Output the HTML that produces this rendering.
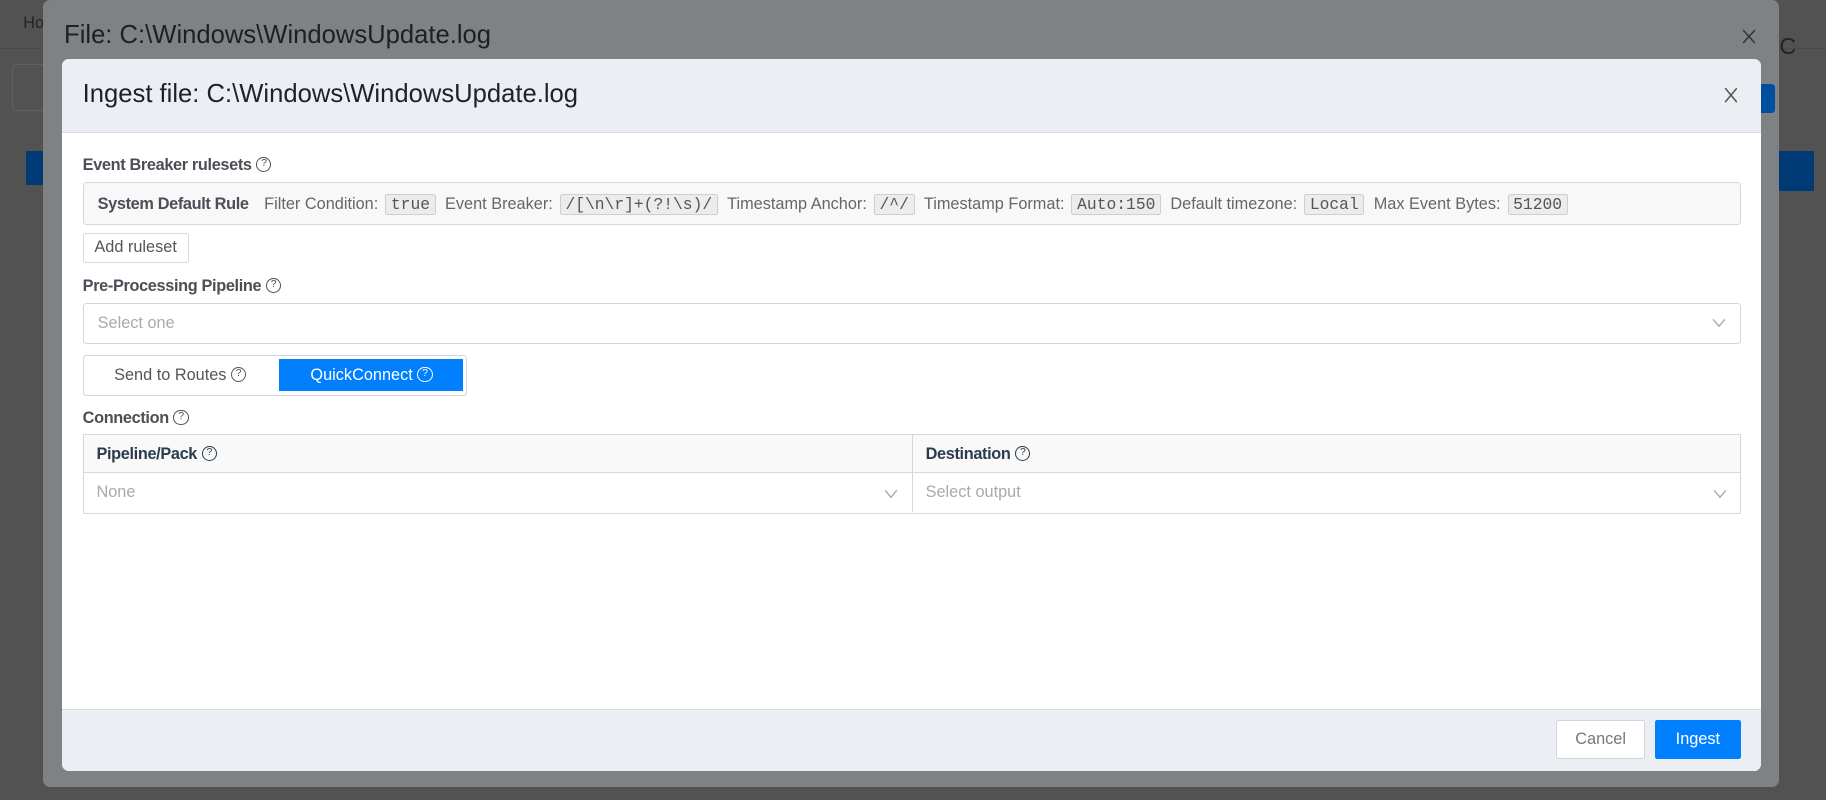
<!DOCTYPE html>
<html><head><meta charset="utf-8"><style>
*{box-sizing:border-box;margin:0;padding:0}
html,body{width:1826px;height:800px;overflow:hidden;background:#525252;font-family:"Liberation Sans",sans-serif}
#w{zoom:1.16454;width:1568px;height:687px;position:relative}
.a{position:absolute}
.q{display:inline-block;width:13px;height:13px;border:1.2px solid currentColor;border-radius:50%;font-size:9px;line-height:11px;text-align:center;vertical-align:middle;margin-left:4px;font-weight:normal;position:relative;top:-1px}
.lbl{font-size:14px;color:#4a4f55;font-weight:bold;letter-spacing:-0.3px}
.chip{font-family:"Liberation Mono",monospace;font-size:14px;background:#ececec;border:1px solid #cfcfcf;border-radius:2px;padding:0 4px;color:#555;margin:0 8px 0 6px}
.rs{font-size:14px;color:#666}
</style></head><body><div id="w">
<div class="a" style="left:0;top:0;width:1568px;height:42px;border-bottom:1px solid #4a4a4a"></div>
<div class="a" style="left:20px;top:12px;font-size:14px;color:#222">Ho</div>
<div class="a" style="left:10px;top:55px;width:40px;height:40px;border:1px solid #606060;border-radius:3px"></div>
<div class="a" style="left:22px;top:130px;width:20px;height:29px;background:#003a75"></div>
<div class="a" style="left:1528px;top:130px;width:30px;height:34px;background:#003a75"></div>
<div class="a" style="left:1528px;top:28px;font-size:20px;color:#222">C</div>
<div class="a" style="left:37px;top:0;width:1491px;height:676px;background:#7f8285;border-radius:6px"></div>
<div class="a" style="left:55px;top:18px;font-size:22px;color:#1d1f21">File: C:\Windows\WindowsUpdate.log</div>
<svg class="a" style="left:1496px;top:25px" width="12" height="13" viewBox="0 0 12 13"><path d="M1 1 L11 12 M11 1 L1 12" stroke="#333" stroke-width="1.3"/></svg>
<div class="a" style="left:1512px;top:72px;width:12px;height:25px;background:#004f9e;border-radius:0 3px 3px 0"></div>

<div class="a" style="left:53px;top:51px;width:1459px;height:611px;background:#fff;border-radius:6px;overflow:hidden">
 <div class="a" style="left:0;top:0;width:1459px;height:63px;background:#ebeff3;border-bottom:1px solid #d8dde2"></div>
 <div class="a" style="left:18px;top:18px;font-size:22px;color:#1e2226">Ingest file: C:\Windows\WindowsUpdate.log</div>
 <svg class="a" style="left:1427px;top:24px" width="12" height="14" viewBox="0 0 12 14"><path d="M1 1 L11 13 M11 1 L1 13" stroke="#555" stroke-width="1.3"/></svg>

 <div class="a lbl" style="left:18px;top:83px">Event Breaker rulesets<span class="q">?</span></div>
 <div class="a" style="left:18px;top:105px;width:1424px;height:37px;background:#f8f8f8;border:1px solid #d6d9dc;border-radius:3px;padding:0 12px;line-height:35px;white-space:nowrap">
  <b style="font-size:14px;color:#4a4f55;letter-spacing:-0.3px">System Default Rule</b>&nbsp;&nbsp;&nbsp;<span class="rs">Filter Condition:</span><span class="chip">true</span><span class="rs">Event Breaker:</span><span class="chip">/[\n\r]+(?!\s)/</span><span class="rs">Timestamp Anchor:</span><span class="chip">/^/</span><span class="rs">Timestamp Format:</span><span class="chip">Auto:150</span><span class="rs">Default timezone:</span><span class="chip">Local</span><span class="rs">Max Event Bytes:</span><span class="chip">51200</span>
 </div>
 <div class="a" style="left:18px;top:149px;width:91px;height:26px;border:1px solid #d6d9dc;border-radius:2px;font-size:14px;color:#555;text-align:center;line-height:24px">Add ruleset</div>

 <div class="a lbl" style="left:18px;top:187px">Pre-Processing Pipeline<span class="q">?</span></div>
 <div class="a" style="left:18px;top:209px;width:1424px;height:35px;border:1px solid #d0d6dc;border-radius:3px;font-size:14px;color:#aaa;padding-left:12px;line-height:33px">Select one
  <svg class="a" style="right:12px;top:11px" width="12" height="10" viewBox="0 0 12 10"><path d="M1 2 L6 8 L11 2" fill="none" stroke="#aaa" stroke-width="1.2"/></svg></div>

 <div class="a" style="left:18px;top:254px;width:330px;height:35px;border:1px solid #d0d6dc;border-radius:3px"></div>
 <div class="a" style="left:45px;top:263px;font-size:14px;color:#555">Send to Routes<span class="q">?</span></div>
 <div class="a" style="left:187px;top:257px;width:158px;height:28px;background:#0080ff;color:#fff;font-size:14px;text-align:center;line-height:28px">QuickConnect<span class="q">?</span></div>

 <div class="a lbl" style="left:18px;top:300px">Connection<span class="q">?</span></div>
 <div class="a" style="left:18px;top:322px;width:1424px;height:68px;border:1px solid #d6d9dc">
  <div class="a" style="left:0;top:0;width:1422px;height:32px;background:#f9f9f9;border-bottom:1px solid #d6d9dc"></div>
  <div class="a" style="left:711px;top:0;width:1px;height:66px;background:#d6d9dc"></div>
  <div class="a" style="left:11px;top:8px;font-size:14px;font-weight:bold;color:#2b3b4d;letter-spacing:-0.3px">Pipeline/Pack<span class="q">?</span></div>
  <div class="a" style="left:723px;top:8px;font-size:14px;font-weight:bold;color:#2b3b4d;letter-spacing:-0.3px">Destination<span class="q">?</span></div>
  <div class="a" style="left:11px;top:41px;font-size:14px;color:#aaa">None</div>
  <div class="a" style="left:723px;top:41px;font-size:14px;color:#aaa">Select output</div>
  <svg class="a" style="left:687px;top:45px" width="12" height="10" viewBox="0 0 12 10"><path d="M1 2 L6 8 L11 2" fill="none" stroke="#aaa" stroke-width="1.2"/></svg>
  <svg class="a" style="left:1399px;top:45px" width="12" height="10" viewBox="0 0 12 10"><path d="M1 2 L6 8 L11 2" fill="none" stroke="#aaa" stroke-width="1.2"/></svg>
 </div>

 <div class="a" style="left:0;top:558px;width:1459px;height:53px;background:#ebeff3;border-top:1px solid #d8dde2"></div>
 <div class="a" style="left:1283px;top:567px;width:77px;height:34px;background:#fff;border:1px solid #d0d6dc;border-radius:2px;font-size:14px;color:#777;text-align:center;line-height:32px">Cancel</div>
 <div class="a" style="left:1368px;top:567px;width:74px;height:34px;background:#0080ff;border-radius:2px;font-size:14px;color:#fff;text-align:center;line-height:34px">Ingest</div>
</div>
</div></body></html>
